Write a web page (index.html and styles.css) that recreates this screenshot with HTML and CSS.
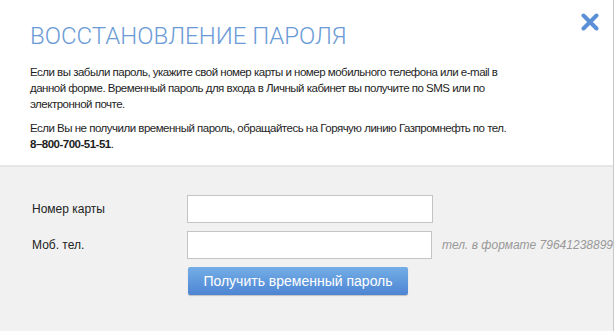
FILE: index.html
```html
<!DOCTYPE html>
<html lang="ru">

<head>
    <meta charset="UTF-8">
    <title>Восстановление пароля</title>
    <link rel="stylesheet" href="styles.css">
</head>

<body>
    <div class="modal">
        <!-- шапка -->
        <div class="modal-top">
            <a class="close" href="#">
                <svg width="18" height="18" viewBox="0 0 18 18">
                    <path d="M2.5 2.5 L15.5 15.5 M15.5 2.5 L2.5 15.5" stroke="#5b8fd6" stroke-width="4" stroke-linecap="round" />
                </svg>
            </a>
            <h1>ВОССТАНОВЛЕНИЕ ПАРОЛЯ</h1>
            <p>Если вы забыли пароль, укажите свой номер карты и номер мобильного телефона или e-mail в данной форме. Временный пароль для входа в Личный кабинет вы получите по SMS или по электронной почте.</p>
            <p>Если Вы не получили временный пароль, обращайтесь на Горячую линию Газпромнефть по тел. <b>8–800-700-51-51</b>.</p>
        </div>

        <!-- форма -->
        <form class="modal-form">
            <div class="row">
                <label>Номер карты</label>
                <input type="text">
            </div>
            <div class="row">
                <label>Моб. тел.</label>
                <input type="text">
                <span class="hint">тел. в формате 79641238899</span>
            </div>
            <div class="row">
                <label></label>
                <button type="button">Получить временный пароль</button>
            </div>
        </form>
    </div>
</body>

</html>
```

FILE: styles.css
```css
body {
    margin: 0;
    padding: 0;
    font-family: Arial, "Liberation Sans", sans-serif;
    color: #222;
    background-color: #fff;
    overflow: hidden;
}

.modal {
    width: 613px;
    height: 331px;
    border-right: 1px solid #c8c8c8;
    background-color: #f1f1f1;
}

/* шапка */
.modal-top {
    position: relative;
    background-color: #fff;
    padding: 22px 30px 13px 30px;
    border-bottom: 2px solid #e6e6e6;
}

.modal-top h1 {
    margin: 0 0 14px 0;
    font-family: Roboto, "Liberation Sans", sans-serif;
    font-weight: 300;
    font-size: 24px;
    line-height: 28px;
    color: #6b9bd6;
}

.modal-top p {
    margin: 0 0 8px 0;
    font-size: 11.5px;
    line-height: 16px;
    letter-spacing: -0.5px;
    color: #1e1e1e;
    padding-right: 70px;
}

.modal-top p:last-child {
    margin-bottom: 0;
}

.close {
    position: absolute;
    top: 13px;
    right: 14px;
    display: block;
    width: 18px;
    height: 18px;
}

/* форма */
.modal-form {
    padding: 28px 0 0 32px;
}

.row {
    display: flex;
    align-items: center;
    margin-bottom: 8px;
}

.row label {
    width: 155px;
    font-size: 12px;
    color: #222;
}

.row input {
    box-sizing: border-box;
    width: 246px;
    height: 28px;
    border: 1px solid #c4c4c4;
    background-color: #fff;
    margin: 0;
}

.hint {
    margin-left: 10px;
    font-size: 12px;
    font-style: italic;
    color: #999;
    white-space: nowrap;
}

.row button {
    margin-left: 1px;
    width: 220px;
    height: 28px;
    border: none;
    border-radius: 2px;
    background: linear-gradient(#74aee6, #4d85d3);
    box-shadow: 0 1px 1px rgba(0, 0, 0, 0.2);
    color: #fff;
    font-family: Arial, "Liberation Sans", sans-serif;
    font-size: 14px;
    cursor: pointer;
}
```
